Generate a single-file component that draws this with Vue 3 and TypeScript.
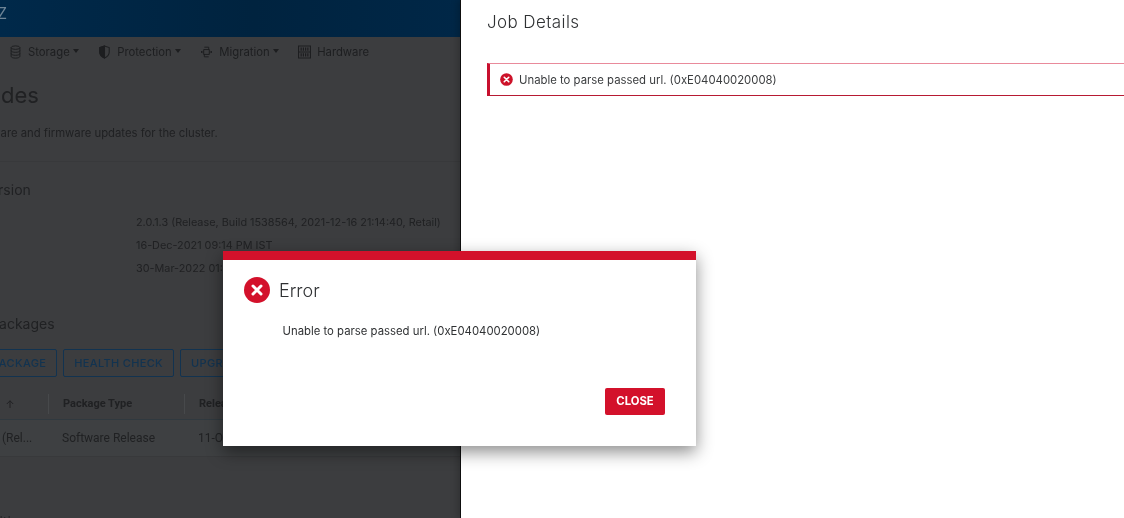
<script setup lang="ts">
type NavItem = { label: string; icon: string; caret: boolean }
type VersionRow = { value: string }

const navItems: NavItem[] = [
  { label: 'Storage', icon: 'storage', caret: true },
  { label: 'Protection', icon: 'shield', caret: true },
  { label: 'Migration', icon: 'migrate', caret: true },
  { label: 'Hardware', icon: 'hardware', caret: false }
]

const versionRows: VersionRow[] = [
  { value: '2.0.1.3 (Release, Build 1538564, 2021-12-16 21:14:40, Retail)' },
  { value: '16-Dec-2021 09:14 PM IST' },
  { value: '30-Mar-2022 01:22 PM IST' }
]

const message = 'Unable to parse passed url. (0xE04040020008)'
</script>

<template>
  <div class="screen">
    <div class="page">
      <header class="topbar"><span class="brand">Z</span></header>

      <nav class="nav">
        <span v-for="item in navItems" :key="item.label" class="nav-item">
          <svg v-if="item.icon === 'storage'" class="nav-icon" viewBox="0 0 14 16" fill="none" stroke="currentColor" stroke-width="1.1">
            <ellipse cx="7" cy="3" rx="5" ry="2" />
            <path d="M2 3v10c0 1.1 2.2 2 5 2s5-.9 5-2V3M2 6.4c0 1.1 2.2 2 5 2s5-.9 5-2M2 9.8c0 1.1 2.2 2 5 2s5-.9 5-2" />
          </svg>
          <svg v-else-if="item.icon === 'shield'" class="nav-icon" viewBox="0 0 14 16" fill="none" stroke="currentColor" stroke-width="1.2">
            <path d="M7 1.2 1.6 3v5c0 3.2 2.3 5.5 5.4 6.8 3.1-1.3 5.4-3.6 5.4-6.8V3z" />
            <path d="M7 1.2 1.6 3v5c0 3.2 2.3 5.5 5.4 6.8z" fill="currentColor" />
          </svg>
          <svg v-else-if="item.icon === 'migrate'" class="nav-icon" viewBox="0 0 14 16" fill="none" stroke="currentColor" stroke-width="1.1">
            <path d="M4.5 2.5h5v3.2M9.5 13.5h-5v-3.2M3.8 5.2h6.4v5.6H3.8z" />
            <path d="M3.5 8H.8M2 6.8.8 8 2 9.2M10.5 8h2.7M12 6.8 13.2 8 12 9.2" />
          </svg>
          <svg v-else class="nav-icon" viewBox="0 0 14 14" fill="none" stroke="currentColor" stroke-width="1.1">
            <path d="M.6.6h12.8v12.8H.6zM.6 7h12.8" />
            <path d="M3.4 2.2v3.4M5.8 2.2v3.4M8.2 2.2v3.4M10.6 2.2v3.4M3.4 8.4v3.4M5.8 8.4v3.4M8.2 8.4v3.4M10.6 8.4v3.4" stroke-width="1.3" />
          </svg>
          <span>{{ item.label }}</span>
          <i v-if="item.caret" class="caret"></i>
        </span>
      </nav>

      <section class="intro">
        <h1>Upgrades</h1>
        <p>View and manage software and firmware updates for the cluster.</p>
      </section>

      <section class="version">
        <h2>Current Version</h2>
        <div v-for="row in versionRows" :key="row.value" class="version-row">{{ row.value }}</div>
      </section>

      <section class="packages">
        <h2>Available Packages</h2>
        <div class="actions">
          <button class="outline">UPLOAD PACKAGE</button>
          <button class="outline">HEALTH CHECK</button>
          <button class="outline">UPGRADE</button>
        </div>
        <div class="table">
          <div class="row head">
            <span class="cell name">
              <svg class="arrow" viewBox="0 0 8 8" fill="none" stroke="currentColor" stroke-width="1">
                <path d="M4 8V.8M.8 4 4 .8 7.2 4" />
              </svg>
            </span>
            <span class="cell type">Package Type</span>
            <span class="cell date">Release Date</span>
          </div>
          <div class="row body">
            <span class="cell name"><span class="ellipsis">(Rel...</span></span>
            <span class="cell type">Software Release</span>
            <span class="cell date">11-Oct-2021</span>
          </div>
        </div>
      </section>

      <h2 class="history">Upgrade Transitions</h2>
    </div>

    <aside class="panel">
      <h3>Job Details</h3>
      <div class="alert">
        <svg class="alert-icon" viewBox="0 0 14 14">
          <circle cx="7" cy="7" r="6.8" fill="#cd1229" />
          <path d="M4.6 4.6l4.8 4.8M9.4 4.6 4.6 9.4" stroke="#fff" stroke-width="1.8" stroke-linecap="round" />
        </svg>
        <span>{{ message }}</span>
      </div>
    </aside>

    <div class="modal" role="dialog">
      <div class="modal-title">
        <svg class="modal-icon" viewBox="0 0 26 26">
          <circle cx="13" cy="13" r="13" fill="#d3112b" />
          <path d="M9 9l8 8M17 9l-8 8" stroke="#fff" stroke-width="3" stroke-linecap="round" />
        </svg>
        <span>Error</span>
      </div>
      <p class="modal-text">{{ message }}</p>
      <div class="modal-footer">
        <button class="close">CLOSE</button>
      </div>
    </div>
  </div>
</template>

<style>
html,
body {
  margin: 0;
  background: #fff;
}
</style>

<style scoped>
.screen {
  position: relative;
  width: 1124px;
  height: 518px;
  overflow: hidden;
  font-family: 'Inter', 'Liberation Sans', sans-serif;
  background: #fff;
  /* the reference is a soft, rescaled capture */
  filter: blur(0.4px);
}

/* dimmed page behind the panel */
.page {
  width: 461px;
  height: 518px;
  overflow: hidden;
  background: #3c3d3f;
  color: #202123;
  border-right: 1px solid #111;
  box-sizing: border-box;
}

.topbar {
  height: 37px;
  background: linear-gradient(90deg, #00294a, #00233f 55%, #002747);
  overflow: hidden;
}
.brand {
  display: block;
  margin: 3px 0 0 -3px;
  font-size: 16px;
  line-height: 20px;
  color: #6d8496;
}

.nav {
  display: flex;
  align-items: center;
  height: 30px;
  padding-left: 9px;
  font-size: 11.3px;
  color: #1d1e20;
}
.nav-item {
  display: flex;
  align-items: center;
  margin-right: 19.5px;
}
.nav-icon {
  width: 13px;
  height: 14px;
  margin-right: 6px;
}
.caret {
  width: 0;
  height: 0;
  margin-left: 3px;
  margin-bottom: 2px;
  border-left: 3.5px solid transparent;
  border-right: 3.5px solid transparent;
  border-top: 4px solid currentColor;
}

.intro {
  height: 95px;
  box-sizing: border-box;
  padding-top: 14px;
  border-bottom: 1px solid #38393b;
}
.intro h1 {
  margin: 0 0 0 -63px;
  font-size: 22px;
  line-height: 28px;
  font-weight: 400;
}
.intro p {
  margin: 16px 0 0 -127.5px;
  font-size: 11.3px;
  line-height: 16px;
  white-space: nowrap;
}

h2 {
  margin: 0;
  font-size: 14px;
  font-weight: 400;
  line-height: 20px;
  white-space: nowrap;
}
.version h2 {
  margin: 18px 0 0 -73px;
}
.version-row {
  margin-left: 136px;
  font-size: 10.85px;
  line-height: 23px;
  white-space: nowrap;
}
.version h2 + .version-row {
  margin-top: 11px;
}

.packages h2 {
  margin: 34px 0 0 -73px;
}
.actions {
  display: flex;
  gap: 6px;
  margin: 15px 0 0 -69px;
}
.outline {
  flex: none;
  height: 28px;
  padding: 0 10px;
  background: transparent;
  border: 1px solid #123350;
  border-radius: 2px;
  color: #123350;
  font: 500 11px/1 'Inter', sans-serif;
  letter-spacing: 0.35px;
  white-space: nowrap;
}

.table {
  margin-top: 11px;
  font-size: 11px;
  white-space: nowrap;
}
.row {
  display: flex;
  align-items: center;
  box-sizing: border-box;
}
.row.head {
  height: 32px;
  font-weight: 700;
  font-family: 'Roboto', sans-serif;
  border-bottom: 1px solid #30393f;
}
.row.body {
  height: 37px;
  background: #3e4042;
  font-family: 'Roboto', sans-serif;
  font-size: 12px;
  border-bottom: 1px solid #38393b;
}
.cell {
  display: block;
  box-sizing: border-box;
}
.row.head .cell + .cell {
  border-left: 1px solid #47494b;
  line-height: 20px;
}
.cell.name {
  width: 48px;
  padding-left: 2px;
}
.row.head .cell.type,
.row.head .cell.date {
  padding-left: 14px;
}
.row.body .cell.type,
.row.body .cell.date {
  padding-left: 14px;
}
.cell.type {
  width: 136px;
}
.arrow {
  display: block;
  width: 8px;
  height: 8px;
  margin-left: 4px;
}
.history {
  margin: 55px 0 0 -99px;
}

/* job details side panel */
.panel {
  position: absolute;
  top: 0;
  left: 461px;
  right: 0;
  bottom: 0;
  box-sizing: border-box;
  padding-left: 26px;
  background: #fff;
  color: #2f3133;
  box-shadow: -3px 0 7px rgba(0, 0, 0, 0.22);
}
.panel h3 {
  margin: 11px 0 0;
  font-size: 17px;
  line-height: 22px;
  font-weight: 300;
  letter-spacing: 0.4px;
}
.alert {
  display: flex;
  align-items: center;
  height: 33px;
  margin-top: 30px;
  box-sizing: border-box;
  padding-left: 10px;
  border-left: 3px solid #c8102e;
  border-top: 1px solid #e98a9b;
  border-bottom: 1px solid #b71a33;
  font-size: 11.35px;
  color: #3a3c3e;
}
.alert-icon {
  width: 13px;
  height: 13px;
  margin-right: 6px;
}

/* error dialog */
.modal {
  position: absolute;
  top: 251px;
  left: 222.5px;
  width: 473.5px;
  height: 195px;
  box-sizing: border-box;
  background: #fff;
  border-top: 9px solid #d3112b;
  box-shadow: 0 6px 16px rgba(0, 0, 0, 0.45);
  color: #2f3133;
}
.modal-title {
  display: flex;
  align-items: center;
  margin: 17px 0 0 21.5px;
  font-size: 18px;
  font-weight: 300;
}
.modal-icon {
  width: 26px;
  height: 26px;
  margin-right: 9px;
}
.modal-text {
  margin: 21px 0 0 60px;
  font-size: 11.35px;
  line-height: 14px;
}
.modal-footer {
  display: flex;
  justify-content: flex-end;
  margin: 50px 31px 0 0;
}
.close {
  width: 60px;
  height: 27px;
  padding: 0;
  border: 0;
  border-radius: 2px;
  background: #d3112b;
  color: #fff;
  font: 700 11.3px/1 'Inter', sans-serif;
}
</style>
